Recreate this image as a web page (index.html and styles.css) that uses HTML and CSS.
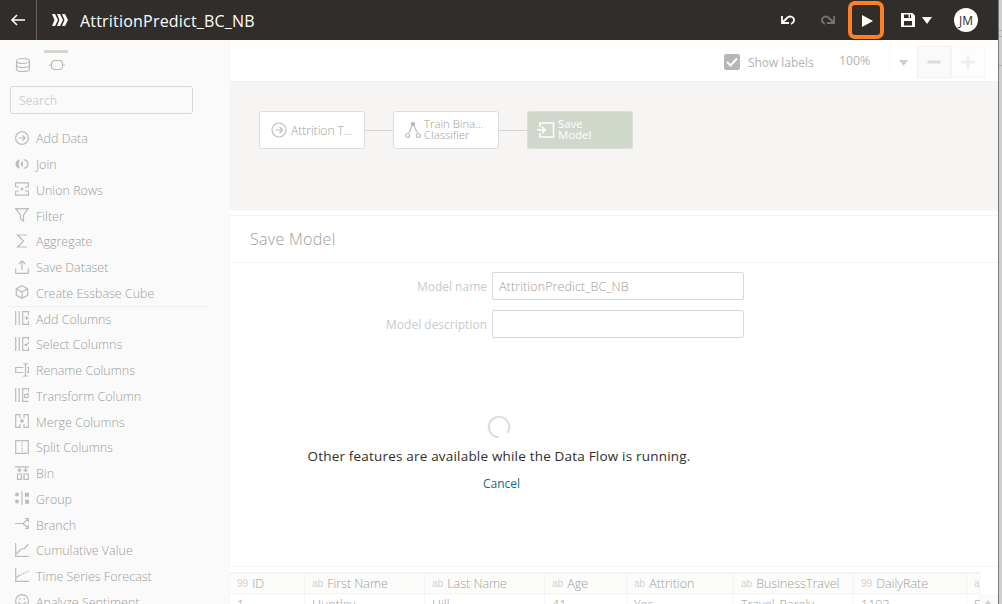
FILE: index.html
```html
<!DOCTYPE html>
<html lang="en">
<head>
<meta charset="utf-8">
<title>AttritionPredict_BC_NB</title>
<link rel="stylesheet" href="styles.css">
</head>
<body>
<div class="screen">
<div class="app">
  <header class="topbar">
    <div class="back"><svg width="16" height="14" viewBox="0 0 16 14"><path d="M15 7H2M7 2L2 7l5 5" fill="none" stroke="#fff" stroke-width="1.6"/></svg></div>
    <svg class="flow" width="16" height="12" viewBox="0 0 16 12"><path d="M0 0h3l3 6-3 6H0l2.500-6zM5 0h3l3 6-3 6H5l2.500-6zM10 0h3l3 6-3 6h-3l2.500-6z" fill="#fff"/></svg>
    <h1 class="title">AttritionPredict_BC_NB</h1>
    <div class="actions">
      <svg class="undo" width="16" height="12" viewBox="0 0 16 12"><path d="M2 2v7h7M2.500 8.500L7 4c3-3 7-1 7 2 0 2-1 3-3 4" fill="none" stroke="#fff" stroke-width="1.8"/></svg>
      <svg class="redo" width="16" height="12" viewBox="0 0 16 12"><path d="M14 2v7H7M13.500 8.500L9 4C6 1 2 3 2 6c0 2 1 3 3 4" fill="none" stroke="#77736f" stroke-width="1.8"/></svg>
      <div class="run"><svg width="12" height="12" viewBox="0 0 12 12"><path d="M1 0l11 6-11 6z" fill="#fff"/></svg></div>
      <svg class="save" width="14" height="14" viewBox="0 0 14 14"><path d="M0 0h11.500L14 2.500V14H0z" fill="#fff"/><path d="M3 1.500h7V5H3zM3 8h8v4.500H3z" fill="#312d2a"/><path d="M7.500 1.500h1.500v3H7.500z" fill="#fff"/></svg>
      <svg class="drop" width="10" height="7" viewBox="0 0 10 7"><path d="M0 0h10L5 7z" fill="#fff"/></svg>
      <div class="avatar">JM</div>
    </div>
  </header>
  <div class="body">
    <aside class="side">
      <div class="tabs">
        <div class="tab"><svg width="16" height="16" viewBox="0 0 16 16"><g class="ln"><ellipse cx="8" cy="4" rx="6.500" ry="2.500"/><path d="M1.500 4v8c0 3.300 13 3.300 13 0V4M1.500 8c0 3.300 13 3.300 13 0"/></g></svg></div>
        <div class="tab on"><svg width="16" height="12" viewBox="0 0 16 12"><path class="ln" d="M4.500 1.500h7l2 2v5l-2 2h-7l-2-2v-5zM0 6h2.500M13.500 6H16"/></svg></div>
      </div>
      <div class="search">Search</div>
      <ul class="list">
        <li><svg viewBox="0 0 14 14"><g class="ln"><circle cx="7" cy="7" r="6.400"/><path d="M3.500 7h6.500M7.500 4.300L10.200 7 7.500 9.700"/></g></svg>Add Data</li>
        <li><svg viewBox="0 0 14 14"><path class="fl" d="M5 2.500a4.500 4.500 0 000 9c-1.500-2.500-1.500-6.500 0-9zM7 3.500c-1.500 2-1.500 5 0 7 1.500-2 1.500-5 0-7z"/><path class="ln" d="M8.800 2.800c5.500 0 5.500 8.400 0 8.400"/></svg>Join</li>
        <li><svg viewBox="0 0 14 14"><path class="ln" d="M.6 5V.8h12.800V5H10M.6 5H4M.6 9v4.200h12.800V9H10M.6 9H4"/><path class="fl" d="M7 5.200L8.800 7 7 8.800 5.200 7z"/></svg>Union Rows</li>
        <li><svg viewBox="0 0 14 14"><path class="ln" d="M.8.700h12.400L8.500 7v6l-3-2V7z"/></svg>Filter</li>
        <li><svg viewBox="0 0 14 14"><path class="ln" d="M12 1H2.500L8.500 7l-6 6H12"/></svg>Aggregate</li>
        <li><svg viewBox="0 0 14 14"><path class="ln" d="M.7 8.500v4.800h12.600V8.500M7 10V1M3.800 4L7 .9 10.200 4"/></svg>Save Dataset</li>
        <li><svg viewBox="0 0 14 14"><path class="ln" d="M7 .7l5.700 3v6.600L7 13.300l-5.700-3V3.700zM1.300 3.700L7 7l5.700-3.300M7 7v6"/></svg>Create Essbase Cube</li>
        <li class="cut"><svg viewBox="0 0 14 14"><path class="ln" d="M.7 0v14M4.200 0v14M13.500 4V.7H7.700v12.600h5.800V10M9.500 7h4.500M11.700 4.800v4.400"/></svg>Add Columns</li>
        <li><svg viewBox="0 0 14 14"><path class="ln" d="M.7 0v14M4.200 0v14M13.500 3V.7H7.700v12.600h5.800V10M9.500 7l1.500 1.500L14 5"/></svg>Select Columns</li>
        <li><svg viewBox="0 0 14 14"><path class="ln" d="M8.500 4.500H.7v5h7.800M12 4.500h1.400v5H12M10.500 1.500v11M8.300.7c1.300 0 2.200.4 2.200 1.200 0-.8.900-1.200 2.200-1.200M8.300 13.300c1.300 0 2.200-.4 2.200-1.200 0 .8.900 1.200 2.200 1.200"/></svg>Rename Columns</li>
        <li><svg viewBox="0 0 14 14"><path class="ln" d="M.7 0v14M4.200 0v14M13.500 3.500V.7H7.700v12.600h5.800"/><circle class="ln" cx="11.300" cy="8" r="1.900"/><path class="ln" d="M12.500 6.500L14 5"/></svg>Transform Column</li>
        <li><svg viewBox="0 0 14 14"><path class="ln" d="M5 4V.7H.7v12.600H5V10M9 4V.7h4.300v12.600H9V10"/><path class="fl" d="M7 4.700L9.300 7 7 9.300 4.700 7z"/></svg>Merge Columns</li>
        <li><svg viewBox="0 0 14 14"><path class="ln" d="M.7.700h12.600v12.600H.7z"/><path class="ln dash" d="M7 2v10"/></svg>Split Columns</li>
        <li><svg viewBox="0 0 14 14"><path class="ln" d="M0 .8h14M4.500 1v4M2.500 3.500l2 2 2-2M10.500 1v4M8.500 3.500l2 2 2-2M2.500 8h4v5.300h-4zM9 8h4.300v5.300H9z"/></svg>Bin</li>
        <li><svg viewBox="0 0 14 14"><circle class="fl" cx="2" cy="3.500" r="2"/><circle class="fl" cx="2" cy="10.500" r="2"/><path class="fl" d="M10 1.700h4v4h-4zM10 8.700h4v4h-4z"/><path class="ln" d="M7 0v14"/></svg>Group</li>
        <li><svg viewBox="0 0 14 14"><path class="ln" d="M0 6.500h8L13 2M8 6.500L13 11M10 1.500h3.300V5M10 11.500h3.300V8"/></svg>Branch</li>
        <li><svg viewBox="0 0 14 14"><path class="ln" d="M.7 0v13.300H14M1.500 11L6 6h3l4.500-5"/></svg>Cumulative Value</li>
        <li><svg viewBox="0 0 14 14"><path class="ln" d="M.7 0v13.300H14M1.500 9.500L5 7"/><path class="ln dash" d="M5.500 7L14 3"/></svg>Time Series Forecast</li>
        <li><svg viewBox="0 0 14 14"><g class="ln"><circle cx="7" cy="7" r="6.400"/><path d="M3.500 8c1 3 6 3 7 0M4.700 4v1.800M9.300 4v1.800"/></g></svg>Analyze Sentiment</li>
      </ul>
    </aside>
    <main class="main">
      <div class="toolbar">
        <span class="check"><svg width="16" height="16" viewBox="0 0 16 16"><rect width="16" height="16" rx="2" fill="#b7b6b5"/><path d="M3 8l3.500 3.500L13 4.500" fill="none" stroke="#fff" stroke-width="2"/></svg></span>
        <span class="show">Show labels</span>
        <span class="pct">100%</span>
        <span class="caret"><svg width="9" height="6" viewBox="0 0 9 6"><path d="M0 0h9L4.500 6z" fill="#cfcfcf"/></svg></span>
        <span class="zoom"><svg width="14" height="14" viewBox="0 0 14 14"><path d="M.5 5.500h13v3H.5z" fill="#dcdcdc"/></svg></span>
        <span class="zoom plus"><svg width="14" height="14" viewBox="0 0 14 14"><path d="M.5 5.500h5v-5h3v5h5v3h-5v5h-3v-5h-5z" fill="#eee"/></svg></span>
      </div>
      <div class="canvas">
        <div class="node"><svg width="16" height="16" viewBox="0 0 16 16"><g class="ln"><circle cx="8" cy="8" r="7"/><path d="M4.500 8H11M8.500 5l3 3-3 3"/></g></svg><span>Attrition T...</span></div>
        <div class="wire"></div>
        <div class="node two"><svg width="16" height="18" viewBox="0 0 16 18"><circle class="fl" cx="8" cy="3" r="2.300"/><path class="ln" d="M7 4.500L4 11.500M9 4.500l3 7"/><circle class="ln" cx="2.600" cy="14.500" r="2"/><circle class="ln" cx="13.400" cy="14.500" r="2"/></svg><span>Train Bina...<br>Classifier</span></div>
        <div class="wire"></div>
        <div class="node two sel"><svg width="18" height="16" viewBox="0 0 18 16"><path d="M3 5V1h13.500v14H3v-4M0 8h7M5 4.800L8.200 8 5 11.200" fill="none" stroke="#fff" stroke-width="1.600"/></svg><span>Save<br>Model</span></div>
      </div>
      <div class="heading"><span>Save Model</span></div>
      <div class="form">
        <div class="field"><label class="name">Model name</label><div class="input">AttritionPredict_BC_NB</div></div>
        <div class="field"><label class="desc">Model description</label><div class="input"></div></div>
        <div class="busy">
          <svg width="24" height="24" viewBox="0 0 24 24"><path d="M11.800 22.200A10.200 10.200 0 1120.400 17.800" fill="none" stroke="#dedede" stroke-width="2.200"/></svg>
          <p class="msg">Other features are available while the Data Flow is running.</p>
          <a class="cancel">Cancel</a>
        </div>
      </div>
      <div class="table">
        <div class="col c1"><div class="th"><i>99</i><b>ID</b></div><div class="td">1</div></div>
        <div class="col c2"><div class="th"><i>ab</i><b>First Name</b></div><div class="td">Huntley</div></div>
        <div class="col c3"><div class="th"><i>ab</i><b>Last Name</b></div><div class="td">Hill</div></div>
        <div class="col c4"><div class="th"><i>ab</i><b>Age</b></div><div class="td">41</div></div>
        <div class="col c5"><div class="th"><i>ab</i><b>Attrition</b></div><div class="td">Yes</div></div>
        <div class="col c6"><div class="th"><i>ab</i><b>BusinessTravel</b></div><div class="td">Travel_Rarely</div></div>
        <div class="col c7"><div class="th"><i>99</i><b>DailyRate</b></div><div class="td">1102</div></div>
        <div class="col c8"><div class="th"><i>ab</i></div><div class="td">Sales</div></div>
        <div class="scroll"><svg width="8" height="5" viewBox="0 0 8 5"><path d="M0 5l4-5 4 5z" fill="#d2d2d2"/></svg></div>
      </div>
    </main>
  </div>
</div>
<div class="edge"><span></span><span></span><span></span></div>
</div>
</body>
</html>
```
FILE: styles.css
```css
* { box-sizing: border-box; }
body { margin: 0; background: #fff; font-family: "Open Sans", "Noto Sans", sans-serif; font-size: 12.5px; color: #b4b3b2; overflow: hidden; }
svg { display: block; flex: none; }
.screen { display: flex; width: 1002px; height: 604px; overflow: hidden; }
.app { width: 998px; height: 604px; display: flex; flex-direction: column; overflow: hidden; }
.edge { width: 4px; border-left: 1px solid #777; background: #cfcfcf; padding-top: 30px; }
.edge span { display: block; height: 6px; border-top: 1px solid #aaa; }
.edge span:nth-child(2) { height: 29px; }

.topbar { height: 40px; flex: none; background: #312d2a; display: flex; align-items: center; color: #fff; }
.back { width: 37px; height: 40px; border-right: 1px solid #67625f; display: flex; align-items: center; padding-left: 10px; }
.flow { margin-left: 15px; }
.title { margin: 0 0 0 12px; font-size: 16px; font-weight: 400; line-height: 40px; padding-top: 1px; height: 40px; letter-spacing: .2px; white-space: nowrap; }
.actions { margin-left: auto; display: flex; align-items: center; height: 40px; padding-right: 20px; }
.redo { margin-left: 24px; }
.run { width: 36px; height: 38px; margin-left: 12px; border: 4px solid #ff7f27; border-radius: 7px; display: flex; align-items: center; padding: 1px 0 0 9px; }
.save { margin-left: 17px; }
.drop { margin: 1px 0 0 7px; }
.avatar { width: 24px; height: 24px; margin-left: 22px; border-radius: 50%; background: #fff; color: #312d2a; font-size: 12px; line-height: 25px; text-align: center; letter-spacing: -.1px; }

.body { flex: 1; display: flex; min-height: 0; }
.side { width: 230px; background: #fafafa; border-right: 1px solid #f7f7f7; flex: none; }
.ln { fill: none; stroke: #bdbcbb; stroke-width: 1.2; }
.fl { fill: #bdbcbb; }
.dash { stroke-dasharray: 1.500 1.200; }
.tabs { display: flex; gap: 9px; padding: 10px 0 0 11px; height: 46px; }
.tab { width: 24px; height: 34px; padding: 7px 4px 0; border-top: 3px solid transparent; }
.tab.on { border-color: #d0d7cc; padding-top: 6px; padding-left: 5px; }
.tab:first-child { padding-top: 4px; }
.search { margin-left: 10px; width: 183px; height: 28px; border: 1px solid #d7d7d7; border-radius: 3px; padding-left: 8px; line-height: 27px; font-size: 12px; color: #cfcfcf; }
.list { list-style: none; margin: 12.600px 0 0; padding: 0; font-weight: 300; color: #9d9c9b; }
.list li { display: flex; align-items: center; height: 25.720px; padding-left: 15px; gap: 7px; white-space: nowrap; line-height: 18px; }
.list svg { width: 14px; height: 14px; margin-top: -3px; }
.list .cut { height: 27px; margin: -1px 20px 0 8px; padding-left: 7px; border-top: 1px solid #efefef; }

.main { flex: 1; display: flex; flex-direction: column; min-width: 0; }
.toolbar { height: 42px; flex: none; display: flex; align-items: center; justify-content: flex-end; padding: 2px 13px 0 0; border-bottom: 1px solid #f1f1f0; }
.show { width: 65px; margin: 2px 26px 0 8px; white-space: nowrap; font-size: 12px; letter-spacing: -.05px; }
.pct { width: 51px; padding-bottom: 3px; font-size: 12.300px; border-right: 1px solid #f7f7f7; }
.caret { width: 27px; padding: 2px 0 0 9px; }
.zoom { width: 34px; height: 32px; border: 1px solid #f0f0f0; background: #fafafa; display: flex; align-items: center; justify-content: center; }
.zoom.plus { background: #fdfdfd; border-color: #f7f7f7; }
.canvas { height: 129px; flex: none; background: #f6f5f4; border-bottom: 1px solid #fafafa; display: flex; align-items: flex-start; padding: 29px 0 0 29px; }
.node { width: 106px; height: 38px; border: 1.500px solid #dddcda; border-radius: 3px; background: #fff; display: flex; align-items: center; padding-left: 11px; gap: 4px; font-size: 12px; white-space: nowrap; font-weight: 300; color: #9d9c9b; }
.node.two { line-height: 11px; font-size: 11.400px; gap: 3px; padding-bottom: 2px; }
.node.two svg { margin-top: 2px; }
.node.sel { background: #d0d7cb; border-color: #dae0d6; color: #fff; font-weight: 400; padding-left: 9px; }
.wire { width: 28px; height: 1px; margin-top: 19px; background: #d4d3d2; }
.heading { margin-top: 4px; height: 48px; flex: none; border: solid #f4f4f4; border-width: 1px 0; padding-left: 20px; font-size: 16px; letter-spacing: .3px; line-height: 46px; font-weight: 300; color: #9d9c9b; }
.form { height: 303px; flex: none; padding-top: 9px; }
.field { display: flex; align-items: center; height: 28px; margin-bottom: 10px; }
.field label { width: 257px; text-align: right; margin-right: 5px; color: #cacaca; padding-top: 1px; white-space: nowrap; font-size: 12px; }
.input { width: 252px; height: 28px; border: 1px solid #d7d7d7; border-radius: 2px; padding-left: 6px; line-height: 27px; font-weight: 300; letter-spacing: .1px; color: #9d9c9b; }
.busy { width: 538px; padding-top: 67px; display: flex; flex-direction: column; align-items: center; }
.msg { margin: 7px 0 0; font-size: 13.500px; letter-spacing: .19px; line-height: 20px; color: #312d2a; white-space: nowrap; }
.cancel { margin: 9px 0 0 5px; font-size: 12px; line-height: 17px; color: #16688f; }
.table { flex: 1; display: flex; border-top: 1px solid #f5f5f5; padding-top: 5px; min-height: 0; overflow: hidden; }
.col { flex: none; overflow: hidden; }
.th { height: 22px; background: #fcfcfa; border: solid #f3f3f3; border-width: 2px 1px 1px 0; display: flex; align-items: center; padding: 0 0 1px 7px; gap: 4px; white-space: nowrap; }
.th i { font: 10px "Liberation Sans", sans-serif; color: #d3d3d2; }
.th b { font-weight: 300; color: #9d9c9b; line-height: 17px; }
.td { padding: 2px 0 0 7px; height: 26px; font-weight: 300; color: #9d9c9b; border-right: 1px solid #f5f5f5; white-space: nowrap; }
.c1 { width: 75px; }
.c2, .c3 { width: 120px; }
.c4 { width: 82px; }
.c5 { width: 107px; }
.c6 { width: 120px; }
.c7 { width: 113px; }
.c8 { width: 13px; }
.scroll { flex: 1; padding: 28px 0 0 4px; background: linear-gradient(#fff 22px, #fafafa 22px); }
```
